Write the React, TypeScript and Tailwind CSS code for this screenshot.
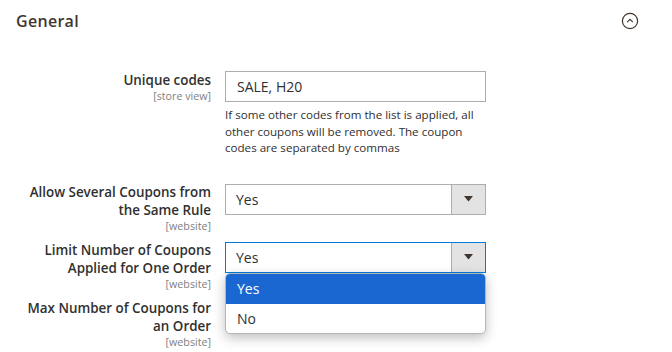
import React from "react";

const font = { fontFamily: '"Open Sans", "Noto Sans", sans-serif' };

function Label({ lines, scope }: { lines: string[]; scope: string }) {
  return (
    <div className="w-[198px] shrink-0 text-right">
      {lines.map((l) => (
        <div key={l} className="text-[13.4px] leading-[18px] font-semibold text-[#303030]">
          {l}
        </div>
      ))}
      <div className="text-[10.7px] leading-[12px] mt-[1px] text-[#808080]">{scope}</div>
    </div>
  );
}

function Arrow() {
  return (
    <div className="w-[34px] h-full shrink-0 bg-[#e3e3e3] border-l border-[#adadad] flex items-center justify-center">
      <svg width="9" height="6" viewBox="0 0 9 6">
        <path d="M0 0 L9 0 L4.5 5.5 Z" fill="#41362f" />
      </svg>
    </div>
  );
}

export default function App() {
  return (
    <div className="w-[672px] h-[352px] bg-white overflow-hidden px-[16px]" style={font}>
      <div className="h-[41px] flex items-center justify-between">
        <div className="text-[16px] font-semibold tracking-[0.3px] text-[#41362f]">General</div>
        <svg width="18" height="18" viewBox="0 0 18 18" className="mr-[17px] mt-[1px]">
          <circle cx="9" cy="9" r="7.6" fill="none" stroke="#41362f" strokeWidth="1.2" />
          <path d="M6.2 10.2 L9 7.4 L11.8 10.2" fill="none" stroke="#41362f" strokeWidth="1.2" />
        </svg>
      </div>

      <div className="ml-[-3px]">
        {/* Row 1 */}
        <div className="flex gap-[14px] mt-[30px]">
          <Label lines={["Unique codes"]} scope="[store view]" />
          <div className="w-[261px] shrink-0">
            <div className="h-[31px] border border-[#adadad] flex items-center px-[11px] text-[14px] text-[#303030]">
              SALE, H20
            </div>
            <div className="text-[11.6px] leading-[16.5px] text-[#303030] mt-[5px]">
              If some other codes from the list is applied, all other coupons will be removed. The coupon codes are separated by commas
            </div>
          </div>
        </div>

        {/* Row 2 */}
        <div className="flex gap-[14px] mt-[26px]">
          <Label lines={["Allow Several Coupons from", "the Same Rule"]} scope="[website]" />
          <div className="w-[261px] shrink-0 pt-[1px]">
            <div className="h-[31px] border border-[#adadad] flex items-center text-[14px] text-[#303030]">
              <div className="flex-1 px-[10px]">Yes</div>
              <Arrow />
            </div>
          </div>
        </div>

        {/* Row 3 */}
        <div className="flex gap-[14px] mt-[9px]">
          <Label lines={["Limit Number of Coupons", "Applied for One Order"]} scope="[website]" />
          <div className="w-[261px] shrink-0 pt-[1px] relative">
            <div className="h-[31px] border border-[#007bdb] flex items-center text-[14px] text-[#303030]">
              <div className="flex-1 px-[10px]">Yes</div>
              <Arrow />
            </div>
            <div className="absolute left-0 top-[32px] w-[261px] bg-white border border-[#b5b5b5] rounded-[5px] overflow-hidden shadow-[0_4px_12px_rgba(0,0,0,0.25)] z-10">
              <div className="h-[30px] bg-[#1b67d2] text-white text-[14px] flex items-center px-[11px]">Yes</div>
              <div className="h-[29px] text-[#303030] text-[14px] flex items-center px-[11px]">No</div>
            </div>
          </div>
        </div>

        {/* Row 4 */}
        <div className="flex gap-[14px] mt-[9px]">
          <Label lines={["Max Number of Coupons for", "an Order"]} scope="[website]" />
        </div>
      </div>
    </div>
  );
}
